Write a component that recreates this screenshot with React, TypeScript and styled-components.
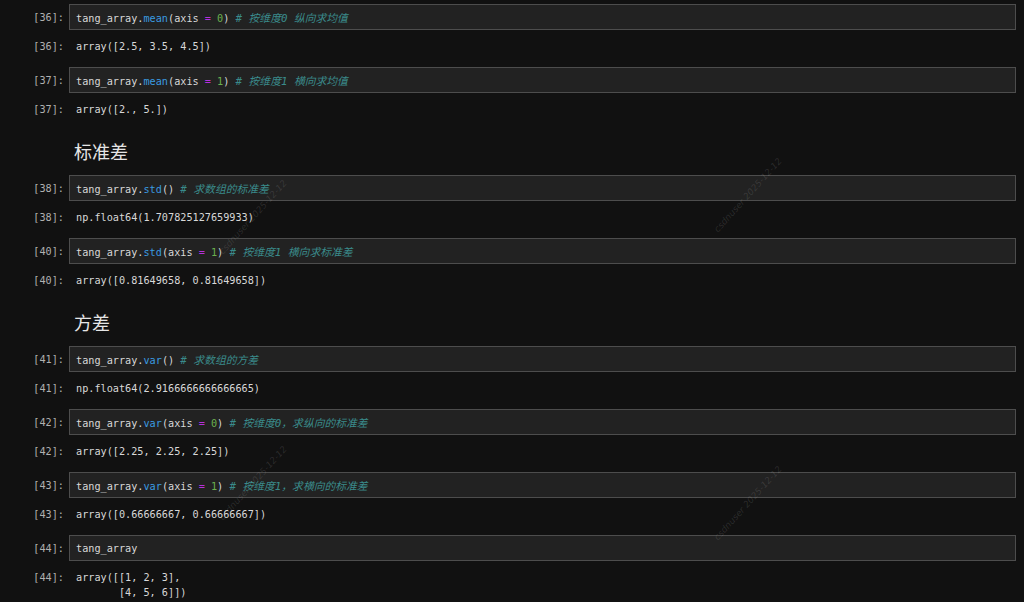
import React from "react";
import styled, { createGlobalStyle } from "styled-components";

const GlobalStyle = createGlobalStyle`
  html, body {
    margin: 0;
    padding: 0;
    background: #111111;
  }
  #root {
    min-height: 602px;
  }
`;

const MONO = `"DejaVu Sans Mono", "Liberation Mono", "Noto Sans CJK SC", monospace`;

type Tok = { t: string; k?: "prop" | "op" | "num" | "cm" };

type CellData =
  | { kind: "code"; n: number; code: Tok[]; out: string[] }
  | { kind: "md"; text: string };

const cells: CellData[] = [
  {
    kind: "code",
    n: 36,
    code: [
      { t: "tang_array." },
      { t: "mean", k: "prop" },
      { t: "(axis " },
      { t: "=", k: "op" },
      { t: " " },
      { t: "0", k: "num" },
      { t: ") " },
      { t: "# 按维度0 纵向求均值", k: "cm" },
    ],
    out: ["array([2.5, 3.5, 4.5])"],
  },
  {
    kind: "code",
    n: 37,
    code: [
      { t: "tang_array." },
      { t: "mean", k: "prop" },
      { t: "(axis " },
      { t: "=", k: "op" },
      { t: " " },
      { t: "1", k: "num" },
      { t: ") " },
      { t: "# 按维度1 横向求均值", k: "cm" },
    ],
    out: ["array([2., 5.])"],
  },
  { kind: "md", text: "标准差" },
  {
    kind: "code",
    n: 38,
    code: [
      { t: "tang_array." },
      { t: "std", k: "prop" },
      { t: "() " },
      { t: "# 求数组的标准差", k: "cm" },
    ],
    out: ["np.float64(1.707825127659933)"],
  },
  {
    kind: "code",
    n: 40,
    code: [
      { t: "tang_array." },
      { t: "std", k: "prop" },
      { t: "(axis " },
      { t: "=", k: "op" },
      { t: " " },
      { t: "1", k: "num" },
      { t: ") " },
      { t: "# 按维度1 横向求标准差", k: "cm" },
    ],
    out: ["array([0.81649658, 0.81649658])"],
  },
  { kind: "md", text: "方差" },
  {
    kind: "code",
    n: 41,
    code: [
      { t: "tang_array." },
      { t: "var", k: "prop" },
      { t: "() " },
      { t: "# 求数组的方差", k: "cm" },
    ],
    out: ["np.float64(2.9166666666666665)"],
  },
  {
    kind: "code",
    n: 42,
    code: [
      { t: "tang_array." },
      { t: "var", k: "prop" },
      { t: "(axis " },
      { t: "=", k: "op" },
      { t: " " },
      { t: "0", k: "num" },
      { t: ") " },
      { t: "# 按维度0，求纵向的标准差", k: "cm" },
    ],
    out: ["array([2.25, 2.25, 2.25])"],
  },
  {
    kind: "code",
    n: 43,
    code: [
      { t: "tang_array." },
      { t: "var", k: "prop" },
      { t: "(axis " },
      { t: "=", k: "op" },
      { t: " " },
      { t: "1", k: "num" },
      { t: ") " },
      { t: "# 按维度1，求横向的标准差", k: "cm" },
    ],
    out: ["array([0.66666667, 0.66666667])"],
  },
  {
    kind: "code",
    n: 44,
    code: [{ t: "tang_array" }],
    out: ["array([[1, 2, 3],", "       [4, 5, 6]])"],
  },
];

// faint diagonal watermark stamps over the notebook
const marks = [
  { x: 205, y: 212 },
  { x: 700, y: 190 },
  { x: 205, y: 478 },
  { x: 700, y: 498 },
];

const Notebook = styled.div`
  position: relative;
  padding: 4px 8px 0 0;
  overflow: hidden;
  height: 598px;
`;

const Row = styled.div`
  display: grid;
  grid-template-columns: 69px 1fr;
  align-items: center;
`;

const Prompt = styled.div`
  font-family: ${MONO};
  font-size: 10.2px;
  color: #b0b0b0;
  text-align: right;
  padding-right: 5px;
  white-space: pre;
`;

const InputBox = styled.div`
  height: 24px;
  box-sizing: content-box;
  background: #222222;
  border: 1px solid #4d4d4d;
  display: flex;
  align-items: center;
  padding-left: 6px;
`;

const Code = styled.span`
  font-family: ${MONO};
  font-size: 10.2px;
  color: #d8d8d8;
  white-space: pre;
`;

const colors = {
  prop: "#3a9be0",
  op: "#b530dc",
  num: "#6bb04e",
  cm: "#3a8b8b",
};

const Tk = styled.span<{ $k?: keyof typeof colors }>`
  color: ${(p) => (p.$k ? colors[p.$k] : "inherit")};
  font-style: ${(p) => (p.$k === "cm" ? "italic" : "normal")};
  font-size: ${(p) => (p.$k === "cm" ? "10.8px" : "inherit")};
`;

const OutputRow = styled(Row)`
  align-items: start;
  padding: 9px 0 13px;
`;

const OutText = styled.pre`
  margin: 0 0 0 7px;
  font-family: ${MONO};
  font-size: 10.2px;
  line-height: 15px;
  color: #d8d8d8;
`;

const OutPrompt = styled(Prompt)`
  line-height: 15px;
`;

const Heading = styled.h2`
  grid-column: 2;
  margin: 0;
  padding: 9px 0 12px 5px;
  font-family: "Noto Sans CJK SC", "Noto Sans", sans-serif;
  font-weight: 400;
  font-size: 18px;
  line-height: 24px;
  color: #e6e6e6;
`;

const Watermark = styled.span`
  position: absolute;
  font-family: "DejaVu Sans", sans-serif;
  font-style: italic;
  font-size: 9px;
  color: rgba(200, 200, 200, 0.15);
  transform: rotate(-48deg);
  transform-origin: center;
  white-space: nowrap;
  pointer-events: none;
`;

const Cell = ({ c }: { c: CellData }) => {
  if (c.kind === "md") {
    return (
      <Row>
        <Heading>{c.text}</Heading>
      </Row>
    );
  }
  return (
    <div>
      <Row>
        <Prompt>[{c.n}]:</Prompt>
        <InputBox>
          <Code>
            {c.code.map((tok, i) => (
              <Tk key={i} $k={tok.k}>
                {tok.t}
              </Tk>
            ))}
          </Code>
        </InputBox>
      </Row>
      <OutputRow>
        <OutPrompt>[{c.n}]:</OutPrompt>
        <OutText>{c.out.join("\n")}</OutText>
      </OutputRow>
    </div>
  );
};

export default function App() {
  return (
    <>
      <GlobalStyle />
      <Notebook>
        {cells.map((c, i) => (
          <Cell key={i} c={c} />
        ))}
        {marks.map((m, i) => (
          <Watermark key={i} style={{ left: m.x, top: m.y }}>
            csdnuser 2025-12-12
          </Watermark>
        ))}
      </Notebook>
    </>
  );
}
